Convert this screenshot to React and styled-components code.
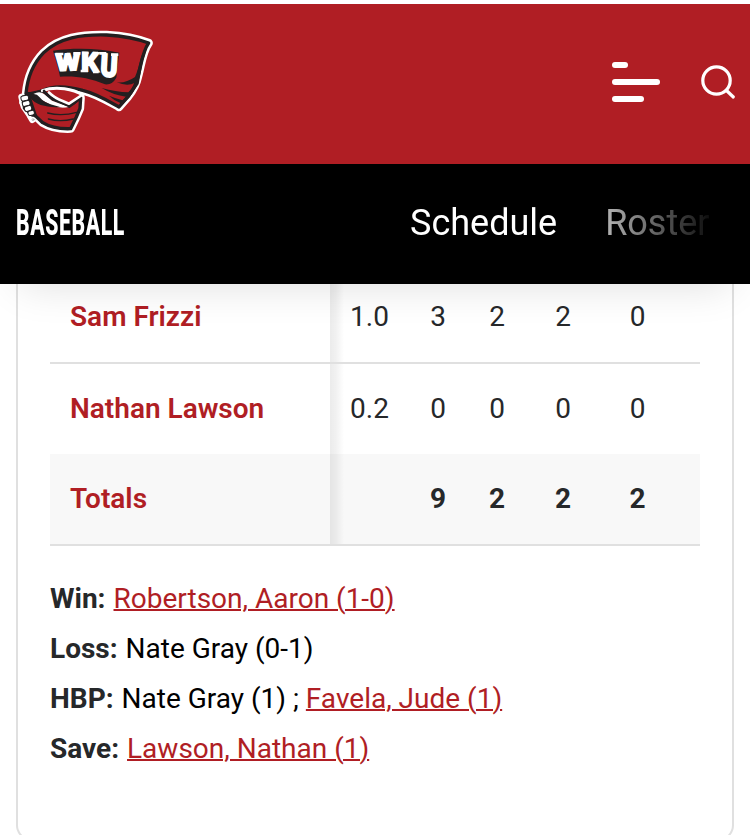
import React from "react";
import styled, { createGlobalStyle } from "styled-components";

const GlobalStyle = createGlobalStyle`
    * {
        box-sizing: border-box;
    }

    body {
        margin: 0;
        background: #fff;
        font-family: Roboto, "Liberation Sans", sans-serif;
        font-size: 28px;
        color: #000;
    }
`

const Page = styled.div`
    height: 835px;
    padding-top: 4px;
    overflow: hidden;
`

const SiteHeader = styled.header`
    position: relative;
    z-index: 1;
    box-shadow: 0 20px 40px -20px rgba(0, 0, 0, 0.14);
`

const TopBar = styled.div`
    display: flex;
    align-items: flex-start;
    height: 160px;
    padding: 25px 14px 0 16px;
    background: #b01e24;
`

const LogoSvg = styled.svg`
    width: 138px;
    height: 106px;
    margin-right: auto;
`

const MenuButton = styled.button`
    display: flex;
    flex-direction: column;
    gap: 11px;
    width: 48px;
    margin: 33px 41px 0 0;
    padding: 0;
    border: 0;
    background: none;
`

const MenuLine = styled.span`
    width: ${({ $width }) => $width}px;
    height: 6px;
    border-radius: 3px;
    background: #fff;
`

const SearchSvg = styled.svg`
    width: 35px;
    height: 35px;
    margin-top: 36px;
`

const SportBar = styled.nav`
    display: flex;
    align-items: center;
    height: 120px;
    padding: 0 16px 2px;
    background: #000;
    color: #fff;
`

const SportName = styled.div`
    width: 394px;
    font-size: 36px;
    font-weight: 800;
    line-height: 42px;
    letter-spacing: 1px;
    transform: scaleX(0.59);
    transform-origin: left center;
`

const SportLinks = styled.div`
    display: flex;
    flex-shrink: 0;
    gap: 48px;
    width: 308px;
    mask-image: linear-gradient(to right, #000 148px, transparent 308px);
`

const SportLink = styled.a`
    font-size: 36px;
    line-height: 42px;
`

const Card = styled.main`
    height: 569px;
    margin: -12px 16px 0;
    padding: 0 32px;
    border: 2px solid #e0e0e0;
    border-top: 0;
    border-radius: 0 0 16px 16px;
`

const StatsTable = styled.div`
    display: flex;
    flex-direction: column;
`

const StatsRow = styled.div`
    display: grid;
    grid-template-columns: 280px 79px 58px 60px 72px 77px;
    align-items: center;
    height: ${({ $last }) => ($last ? 90 : 92)}px;
    border-bottom: ${({ $last }) => ($last ? 0 : 2)}px solid #e0e0e0;
    background: ${({ $total }) => ($total ? "#f8f8f8" : "#fff")};
    color: #26282a;
    font-weight: ${({ $total }) => ($total ? 700 : 400)};
`

const PlayerCell = styled.div`
    padding: 0 0 2px 20px;
    color: #b01e24;
    font-weight: 600;
`

const FirstCell = styled.div`
    display: flex;
    align-items: center;
    justify-content: center;
    height: 100%;
    padding-bottom: 2px;
    background: linear-gradient(to right, rgba(0, 0, 0, 0.08), rgba(0, 0, 0, 0.055) 6px, transparent 14px);
`

const StatCell = styled.div`
    padding-bottom: 2px;
    text-align: center;
`

const Notes = styled.div`
    margin-top: 28px;
`

const Note = styled.div`
    line-height: 50px;
    white-space: pre;
`

const NoteLabel = styled.strong`
    margin-right: 8px;
    color: #26282a;
    font-weight: 700;
`

const NoteLink = styled.a`
    color: #b01e24;
    text-decoration: underline;
    text-decoration-thickness: 2px;
`

const rows = [
    { name: "Sam Frizzi", stats: ["1.0", "3", "2", "2", "0"] },
    { name: "Nathan Lawson", stats: ["0.2", "0", "0", "0", "0"], last: true },
    { name: "Totals", stats: ["", "9", "2", "2", "2"], total: true },
]

function Logo() {
    const flag = "M78 236C82 190 98 147 131 113C178 67 245 58 320 60C370 63 417 73 446 84C427 110 424 150 414 185Q408 215 384 245L357 276C325 258 290 236 248 226C205 214 160 211 130 226L104 236Z"
    const hand = "M82 238L105 233L130 228L152 250L207 274L242 248L240 280L229 306L212 341Q160 343 128 323L108 304L90 290L70 262Z"

    return (
        <LogoSvg viewBox="48 42 414 318" fill="none" strokeLinejoin="round" strokeLinecap="round">
            <g stroke="#fff" strokeWidth="25">
                <path d={flag} />
                <path d={hand} />
                <path d="M65 246L72 275L89 300L97 314" strokeWidth="20" />
            </g>
            <path d={flag} fill="#b01e24" stroke="#231f20" strokeWidth="10" />
            <path d={hand} fill="#b01e24" stroke="#231f20" strokeWidth="10" />
            {/* folds on the open edge */}
            <path d="M446 82C418 120 421 152 405 186Q378 205 350 202Q383 216 405 203Q399 218 385 232Q348 231 305 219Q341 241 378 245L368 256Q349 251 327 242Q341 256 361 264L359 277L389 247L416 207L428 140Z" fill="#231f20" />
            <path d="M159 107C220 98 296 99 358 113L349 188Q336 211 315 208C269 188 224 182 180 185L174 158Z" fill="#231f20" />
            {/* opening between flag and hand */}
            <path d="M135 228C170 214 220 224 247 240Q233 253 207 266Q170 252 152 240Z" fill="#b01e24" />
            <path d="M127 227C170 212 220 223 249 240" stroke="#fff" strokeWidth="9" />
            <path d="M100 237Q119 226 132 237L156 257L207 276Q178 282 155 271L119 252Z" fill="#fff" />
            <path d="M132 228Q150 250 174 257L207 272" stroke="#231f20" strokeWidth="8" />
            <path d="M147 232Q165 250 188 258L207 266L246 240" stroke="#fff" strokeWidth="8" />
            <path d="M86 242Q106 230 119 247Q133 266 167 272Q190 281 214 274L239 251Q230 268 207 276Q160 279 133 272Q110 268 96 254Z" fill="#231f20" />
            <path d="M143 294Q185 305 230 292M145 312Q180 322 220 312" stroke="#231f20" strokeWidth="4" />
            {/* knuckles */}
            <path d="M70 244L88 243L107 300L97 302L72 280Z" fill="#231f20" stroke="#231f20" strokeWidth="7" />
            <g fill="#fff" stroke="#231f20" strokeWidth="3">
                <rect x="63" y="242" width="23" height="15" rx="6" transform="rotate(-12 74 250)" />
                <rect x="67" y="258" width="23" height="15" rx="6" transform="rotate(-13 78 265)" />
                <rect x="73" y="273" width="22" height="15" rx="6" transform="rotate(-16 84 280)" />
                <rect x="84" y="287" width="19" height="14" rx="6" transform="rotate(-12 93 294)" />
            </g>
            <circle cx="99" cy="314" r="3" stroke="#999" strokeWidth="2" />
            <g fill="#fff" stroke="#fff" strokeWidth="4" strokeLinejoin="miter" fontFamily="Roboto, sans-serif" fontWeight="900" fontSize="64">
                <text transform="matrix(1 -.04 .04 1.12 168 168)" textLength="73" lengthAdjust="spacingAndGlyphs">W</text>
                <text transform="matrix(1 .04 0 1.24 244 168)" textLength="52" lengthAdjust="spacingAndGlyphs">K</text>
                <text transform="matrix(1 .1 -.08 1.46 300 182)" textLength="51" lengthAdjust="spacingAndGlyphs">U</text>
            </g>
            {/* slab ends of the letters */}
            <path d="M166 117H190M220 115H241M246 114H266M279 114H294M242 168H264M279 171H296M298 115H319M333 119H355" stroke="#fff" strokeWidth="8" strokeLinecap="butt" />
        </LogoSvg>
    )
}

function StatLine({ name, stats, last, total }) {
    const [first, ...others] = stats

    return (
        <StatsRow $last={last} $total={total}>
            <PlayerCell>{name}</PlayerCell>
            <FirstCell>{first}</FirstCell>
            {others.map((value, index) => (
                <StatCell key={index}>{value}</StatCell>
            ))}
        </StatsRow>
    )
}

export default function App() {
    return (
        <Page>
            <GlobalStyle />
            <SiteHeader>
                <TopBar>
                    <Logo />
                    <MenuButton aria-label="Menu">
                        <MenuLine $width={16} />
                        <MenuLine $width={48} />
                        <MenuLine $width={32} />
                    </MenuButton>
                    <SearchSvg viewBox="0 0 35 35" fill="none" stroke="#fff" strokeWidth="3.2" strokeLinecap="round">
                        <circle cx="15.5" cy="15.5" r="13.7" />
                        <path d="M25.5 25.5L32.3 32" />
                    </SearchSvg>
                </TopBar>
                <SportBar>
                    <SportName>BASEBALL</SportName>
                    <SportLinks>
                        <SportLink>Schedule</SportLink>
                        <SportLink>Roster</SportLink>
                    </SportLinks>
                </SportBar>
            </SiteHeader>
            <Card>
                <StatsTable>
                    {rows.map((row) => (
                        <StatLine key={row.name} {...row} />
                    ))}
                </StatsTable>
                <Notes>
                    <Note><NoteLabel>Win:</NoteLabel><NoteLink>Robertson, Aaron (1-0)</NoteLink></Note>
                    <Note><NoteLabel>Loss:</NoteLabel>Nate Gray (0-1)</Note>
                    <Note><NoteLabel>HBP:</NoteLabel>Nate Gray (1) ; <NoteLink>Favela, Jude (1)</NoteLink></Note>
                    <Note><NoteLabel>Save:</NoteLabel><NoteLink>Lawson, Nathan (1)</NoteLink></Note>
                </Notes>
            </Card>
        </Page>
    )
}
